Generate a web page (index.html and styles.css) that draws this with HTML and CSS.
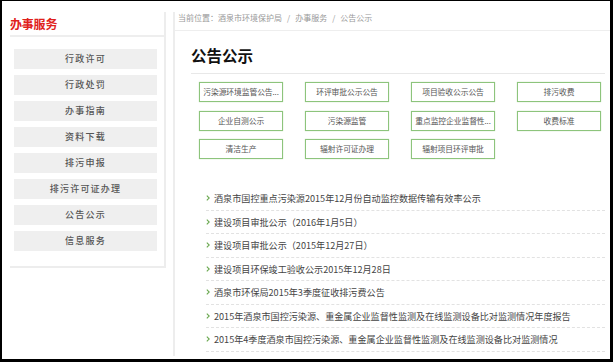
FILE: index.html
```html
<!DOCTYPE html>
<html lang="zh-CN">
<head>
<meta charset="utf-8">
<title>公告公示</title>
<link rel="stylesheet" href="styles.css">
</head>
<body>
<div class="frame">
  <aside class="side">
    <h2 class="side-title">办事服务</h2>
    <ul class="menu">
      <li class="menu-item">行政许可</li>
      <li class="menu-item">行政处罚</li>
      <li class="menu-item">办事指南</li>
      <li class="menu-item">资料下载</li>
      <li class="menu-item">排污申报</li>
      <li class="menu-item">排污许可证办理</li>
      <li class="menu-item">公告公示</li>
      <li class="menu-item">信息服务</li>
    </ul>
  </aside>
  <main class="main">
    <div class="crumb">当前位置：酒泉市环境保护局<span class="sep">/</span>办事服务<span class="sep">/</span>公告公示</div>
    <h1 class="title">公告公示</h1>
    <div class="cats">
      <a class="cat">污染源环境监管公告...</a>
      <a class="cat">环评审批公示公告</a>
      <a class="cat">项目验收公示公告</a>
      <a class="cat">排污收费</a>
      <a class="cat">企业自测公示</a>
      <a class="cat">污染源监管</a>
      <a class="cat">重点监控企业监督性...</a>
      <a class="cat">收费标准</a>
      <a class="cat">清洁生产</a>
      <a class="cat">辐射许可证办理</a>
      <a class="cat">辐射项目环评审批</a>
    </div>
    <ul class="news">
      <li class="news-item"><svg class="arrow" viewBox="0 0 4 6" width="4" height="6"><path d="M0.8 0.6 L3.2 3 L0.8 5.4" fill="none" stroke="#6aa84f" stroke-width="1.1"/></svg>酒泉市国控重点污染源2015年12月份自动监控数据传输有效率公示</li>
      <li class="news-item"><svg class="arrow" viewBox="0 0 4 6" width="4" height="6"><path d="M0.8 0.6 L3.2 3 L0.8 5.4" fill="none" stroke="#6aa84f" stroke-width="1.1"/></svg>建设项目审批公示（2016年1月5日）</li>
      <li class="news-item"><svg class="arrow" viewBox="0 0 4 6" width="4" height="6"><path d="M0.8 0.6 L3.2 3 L0.8 5.4" fill="none" stroke="#6aa84f" stroke-width="1.1"/></svg>建设项目审批公示（2015年12月27日）</li>
      <li class="news-item"><svg class="arrow" viewBox="0 0 4 6" width="4" height="6"><path d="M0.8 0.6 L3.2 3 L0.8 5.4" fill="none" stroke="#6aa84f" stroke-width="1.1"/></svg>建设项目环保竣工验收公示2015年12月28日</li>
      <li class="news-item"><svg class="arrow" viewBox="0 0 4 6" width="4" height="6"><path d="M0.8 0.6 L3.2 3 L0.8 5.4" fill="none" stroke="#6aa84f" stroke-width="1.1"/></svg>酒泉市环保局2015年3季度征收排污费公告</li>
      <li class="news-item"><svg class="arrow" viewBox="0 0 4 6" width="4" height="6"><path d="M0.8 0.6 L3.2 3 L0.8 5.4" fill="none" stroke="#6aa84f" stroke-width="1.1"/></svg>2015年酒泉市国控污染源、重金属企业监督性监测及在线监测设备比对监测情况年度报告</li>
      <li class="news-item"><svg class="arrow" viewBox="0 0 4 6" width="4" height="6"><path d="M0.8 0.6 L3.2 3 L0.8 5.4" fill="none" stroke="#6aa84f" stroke-width="1.1"/></svg>2015年4季度酒泉市国控污染源、重金属企业监督性监测及在线监测设备比对监测情况</li>
    </ul>
  </main>
</div>
</body>
</html>
```

FILE: styles.css
```css
* { box-sizing: border-box; }
html, body { margin: 0; padding: 0; background: #fff; }
body {
  font-family: "Noto Sans CJK SC", "Noto Sans", sans-serif;
  color: #444;
}
ul { list-style: none; margin: 0; padding: 0; }
h1, h2 { margin: 0; }

.frame {
  width: 613px;
  height: 362px;
  border-style: solid;
  border-color: #000;
  border-width: 1px 3px 3px 2px;
  padding: 11px 0 3px 8px;
  display: flex;
  align-items: flex-start;
  overflow: hidden;
}

/* sidebar */
.side {
  width: 156px;
  flex: none;
  border-right: 2px solid #ededed;
  border-bottom: 2px solid #ededed;
  padding: 4px 0 15px 0;
}
.side-title {
  font-size: 12px;
  line-height: 16px;
  font-weight: 700;
  color: #e0211b;
  letter-spacing: -0.2px;
  padding-bottom: 3px;
  border-bottom: 2px solid #eeeeee;
}
.menu {
  padding: 12px 7px 0 4px;
  display: flex;
  flex-direction: column;
  gap: 6px;
}
.menu-item {
  height: 20px;
  line-height: 20px;
  background: #efefef;
  text-align: center;
  font-size: 9px;
  letter-spacing: 1.2px;
  color: #555;
  font-weight: 500;
}

/* main */
.main {
  flex: 1;
  align-self: stretch;
  margin-left: 7px;
  border-left: 2px solid #ededed;
  min-width: 0;
  overflow: hidden;
}
.crumb {
  font-size: 8px;
  line-height: 12px;
  color: #999;
  padding: 0 0 6px 3px;
  border-bottom: 1px solid #eeeeee;
  white-space: nowrap;
}
.sep { margin: 0 5px; }
.title {
  margin: 14px 5px 0 16px;
  font-size: 15.5px;
  line-height: 20px;
  font-weight: 700;
  color: #111;
  padding-bottom: 8px;
  border-bottom: 1px solid #e8e8e8;
}
.cats {
  margin: 8px 0 0 24px;
  display: grid;
  grid-template-columns: repeat(4, 84px);
  column-gap: 22px;
  row-gap: 8.5px;
}
.cat {
  height: 20px;
  line-height: 18px;
  border: 1px solid #8dc47c;
  box-shadow: 0 0 1px #b5dba9;
  font-size: 7.8px;
  color: #555;
  text-align: center;
  padding: 0;
  white-space: nowrap;
  letter-spacing: -0.1px;
}
.news {
  margin: 28px 5px 0 31px;
}
.news-item {
  height: 23.5px;
  line-height: 22.5px;
  border-bottom: 1px dashed #e2e2e2;
  font-size: 9.1px;
  color: #444;
  white-space: nowrap;
  display: flex;
  align-items: center;
}
.arrow {
  flex: none;
  margin-right: 4px;
}
```
